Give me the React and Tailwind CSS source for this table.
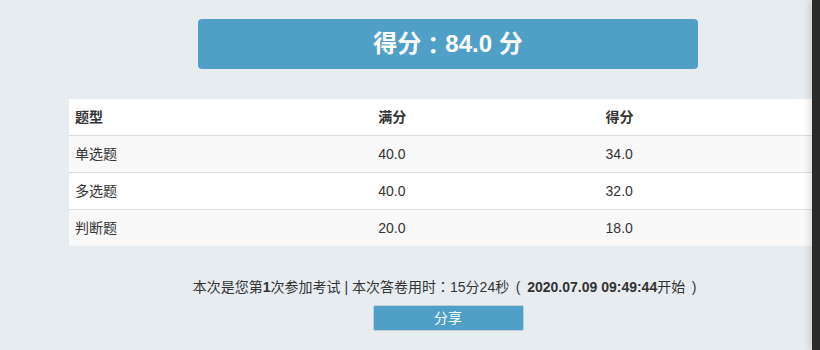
export default function App() {
  const rows = [
    { type: "单选题", full: "40.0", got: "34.0" },
    { type: "多选题", full: "40.0", got: "32.0" },
    { type: "判断题", full: "20.0", got: "18.0" },
  ];
  const font = { fontFamily: '"Liberation Sans", "Noto Sans CJK SC", sans-serif' };
  // full-width punctuation drawn centred in its em box
  const punct = { fontFamily: '"Noto Sans CJK TC", sans-serif' };

  return (
    <div
      className="relative h-[350px] w-[820px] overflow-hidden bg-[#e7ecf0] text-[14px] leading-[20px] text-[#333]"
      style={font}
    >
      <div className="ml-[69px] w-[758px] pt-[19px]">
        {/* score banner */}
        <div className="mx-auto flex h-[50px] w-[500px] items-center justify-center rounded-[4px] bg-[#4f9fc6] text-[24px] font-bold text-white">
          得分<span style={punct}>：</span>84.0 分
        </div>

        {/* score table */}
        <table className="mt-[30px] w-full border-collapse bg-white">
          <thead>
            <tr>
              <th className="h-[36px] w-[40%] px-[6px] text-left font-bold">题型</th>
              <th className="h-[36px] w-[30%] px-[6px] text-left font-bold">满分</th>
              <th className="h-[36px] w-[30%] px-[6px] text-left font-bold">得分</th>
            </tr>
          </thead>
          <tbody>
            {rows.map((r, i) => (
              <tr key={r.type} className={i % 2 === 0 ? "bg-[#f9f9f9]" : "bg-white"}>
                <td className="h-[37px] border-t border-[#dddddd] px-[6px]">{r.type}</td>
                <td className="h-[37px] border-t border-[#dddddd] px-[6px]">{r.full}</td>
                <td className="h-[37px] border-t border-[#dddddd] px-[6px]">{r.got}</td>
              </tr>
            ))}
          </tbody>
        </table>

        {/* summary line */}
        <p className="mt-[30px] text-center">
          本次是您第<b>1</b>次参加考试 | 本次答卷用时<span style={punct}>：</span>15分24秒
          <span className="inline-block w-[18px] text-center">(</span>
          <b>2020.07.09 09:49:44</b>开始
          <span className="inline-block w-[18px] text-center">)</span>
        </p>

        <div className="mt-[8px] flex justify-center">
          <button className="h-[26px] w-[151px] rounded-[2px] border border-[#c3cdd3] bg-[#4f9fc6] text-[14px] text-white">
            分享
          </button>
        </div>
      </div>

      {/* dark side panel edge */}
      <div className="absolute right-0 top-0 h-full w-[8px] bg-[#2a2a2a] shadow-[-3px_0_6px_rgba(0,0,0,0.12)]" />
    </div>
  );
}
